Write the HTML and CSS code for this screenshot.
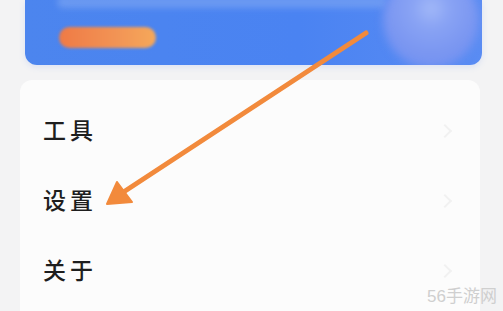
FILE: index.html
```html
<!DOCTYPE html>
<html lang="zh">
<head>
<meta charset="utf-8">
<link rel="stylesheet" href="styles.css">
</head>
<body>
<div class="page">
  <div class="banner">
    <div class="banner-text"></div>
    <div class="banner-pill"></div>
    <div class="banner-orb"></div>
  </div>
  <div class="menu">
    <div class="item"><span class="label">工具</span><span class="chev"></span></div>
    <div class="item"><span class="label">设置</span><span class="chev"></span></div>
    <div class="item"><span class="label">关于</span><span class="chev"></span></div>
  </div>
  <svg class="arrow" width="503" height="311" viewBox="0 0 503 311">
    <line x1="366" y1="33" x2="122" y2="193" stroke="#f28a3c" stroke-width="5" stroke-linecap="round"/>
    <polygon points="107,204 117,182 132,202" fill="#f28a3c" stroke="#f28a3c" stroke-width="2" stroke-linejoin="round"/>
  </svg>
  <div class="watermark">56手游网</div>
</div>
</body>
</html>
```
FILE: styles.css
```css
html, body {
  margin: 0;
  padding: 0;
}
body {
  width: 503px;
  height: 311px;
  overflow: hidden;
  background: #f3f3f4;
  font-family: "Noto Sans CJK SC", "Noto Sans", sans-serif;
}
.page {
  position: relative;
  width: 503px;
  height: 311px;
  display: flex;
  flex-direction: column;
  gap: 15px;
}
.banner {
  position: relative;
  margin: 0 21px 0 25px;
  height: 65px;
  border-radius: 0 0 12px 12px;
  background: linear-gradient(90deg, #4c85ee 0%, #4a83f2 60%, #5a8cf3 100%);
  overflow: hidden;
  box-shadow: 0 2px 6px rgba(80, 130, 240, 0.15);
}
.banner-text {
  position: absolute;
  left: 32px;
  top: -4px;
  width: 330px;
  height: 12px;
  border-radius: 6px;
  background: #79a3f3;
  filter: blur(3px);
  opacity: 0.7;
}
.banner-pill {
  position: absolute;
  left: 34px;
  top: 27px;
  width: 97px;
  height: 21px;
  border-radius: 11px;
  background: linear-gradient(90deg, #ef7a45 0%, #f29455 60%, #f5a85a 100%);
  filter: blur(1.5px);
}
.banner-orb {
  position: absolute;
  left: 358px;
  top: -28px;
  width: 96px;
  height: 96px;
  border-radius: 50%;
  background: radial-gradient(circle at 50% 38%, #a3b9f8 0%, #89a3f4 25%, #7a96f1 60%, #6c8df0 100%);
  filter: blur(4px);
}
.menu {
  flex: 1;
  margin: 0 23px 0 20px;
  background: #fcfcfc;
  border-radius: 12px 12px 0 0;
  padding: 16px 20px 0 23px;
  display: flex;
  flex-direction: column;
}
.item {
  height: 70px;
  display: flex;
  align-items: center;
  justify-content: space-between;
}
.label {
  font-size: 23px;
  font-weight: 500;
  letter-spacing: 4px;
  color: #1e1e1e;
  margin-top: -4px;
}
.chev {
  width: 8px;
  height: 8px;
  border-top: 2px solid #f1f1f1;
  border-right: 2px solid #f1f1f1;
  transform: rotate(45deg);
  margin-right: 10px;
}
.arrow {
  position: absolute;
  left: 0;
  top: 0;
}
.watermark {
  position: absolute;
  right: 6px;
  bottom: 4px;
  font-size: 17px;
  color: #cfcfcf;
  font-family: "Liberation Sans", "Noto Sans CJK SC", sans-serif;
}
```
